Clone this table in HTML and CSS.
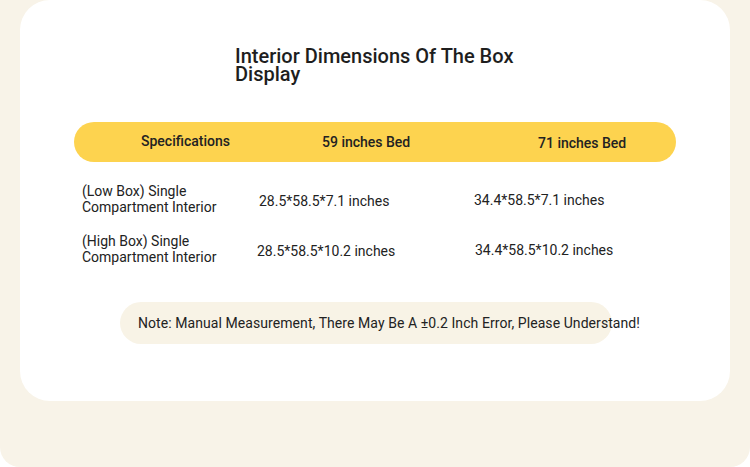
FILE: index.html
```html
<!DOCTYPE html>
<html>
<head>
<meta charset="utf-8">
<link rel="stylesheet" href="styles.css">
</head>
<body>
<div class="panel">
  <div class="card">
    <div class="title-wrap">
      <h1 class="title">Interior Dimensions Of The Box<br>Display</h1>
    </div>
    <div class="table">
      <div class="head">
        <div class="hc hc1">Specifications</div>
        <div class="hc hc2">59 inches Bed</div>
        <div class="hc hc3">71 inches Bed</div>
      </div>
      <div class="row row1">
        <div class="c c1">(Low Box) Single<br>Compartment Interior</div>
        <div class="c c2">28.5*58.5*7.1 inches</div>
        <div class="c c3">34.4*58.5*7.1 inches</div>
      </div>
      <div class="row row2">
        <div class="c c1">(High Box) Single<br>Compartment Interior</div>
        <div class="c c2">28.5*58.5*10.2 inches</div>
        <div class="c c3">34.4*58.5*10.2 inches</div>
      </div>
    </div>
    <div class="note-wrap">
      <div class="note">Note: Manual Measurement, There May Be A ±0.2 Inch Error, Please Understand!</div>
    </div>
  </div>
</div>
</body>
</html>
```

FILE: styles.css
```css
html, body {
  margin: 0;
  padding: 0;
  background: #ffffff;
}
body {
  font-family: Roboto, "Liberation Sans", sans-serif;
  color: #222222;
}
.panel {
  width: 750px;
  height: 467px;
  background: #f8f3e8;
  border-radius: 0 0 20px 20px;
  overflow: hidden;
}
.card {
  margin: 0 20px;
  height: 401px;
  background: #ffffff;
  border-radius: 30px;
  box-sizing: border-box;
  padding: 47px 0 0 54px;
}
.title-wrap {
  display: flex;
  padding-left: 161px;
}
.title {
  margin: 0;
  font-size: 20px;
  font-weight: 500;
  line-height: 18px;
  color: #1e1e1e;
}
.table {
  margin-top: 39px;
  width: 602px;
}
.head {
  display: grid;
  grid-template-columns: 248px 216px 1fr;
  height: 40px;
  background: #fdd34f;
  border-radius: 20px;
  align-items: center;
  font-size: 14px;
  font-weight: 500;
}
.hc1 { padding-left: 67px; margin-top: -2px; }
.hc3 { margin-top: 2px; }
.row {
  display: grid;
  grid-template-columns: 176px 216px 1fr;
  align-items: center;
  padding-left: 8px;
  font-size: 14px;
  line-height: 16px;
}
.row1 { margin-top: 21px; }
.row2 { margin-top: 18px; }
.c2, .c3 { margin-top: 3px; }
.c3 { margin-top: 1px; }
.c2 { padding-left: 1px; }
.row2 .c2 { margin-left: -2px; }
.row2 .c3 { margin-left: 1px; }
.note-wrap {
  margin-top: 37px;
  padding-left: 46px;
}
.note {
  width: 492px;
  height: 42px;
  box-sizing: border-box;
  background: #f8f3e6;
  border-radius: 21px;
  padding-left: 18px;
  font-size: 14px;
  letter-spacing: 0.07px;
  line-height: 42px;
  white-space: nowrap;
}
```
